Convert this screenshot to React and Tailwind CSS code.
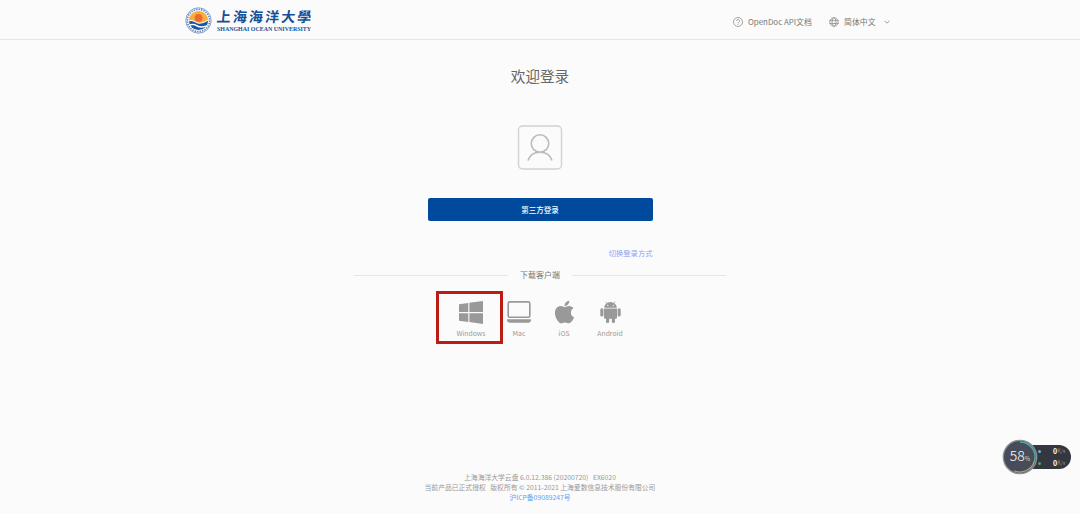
import React from "react";
import { FaApple } from "react-icons/fa";

const SchoolLogo = () => (
  <svg viewBox="0 0 52 52" className="h-[27px] w-[27px]">
    <defs>
      <clipPath id="emblem">
        <circle cx="26" cy="26" r="18.500" />
      </clipPath>
    </defs>
    <circle cx="26" cy="26" r="24.500" fill="#f3f7fc" stroke="#7396c6" strokeWidth="1.600" />
    <circle cx="26" cy="26" r="21.500" fill="none" stroke="#5c82b8" strokeWidth="3" strokeDasharray="2.600 2.200" />
    <circle cx="26" cy="26" r="18.500" fill="#f9ad3c" />
    <g clipPath="url(#emblem)">
      <circle cx="26" cy="21" r="7.500" fill="#ee6830" />
      <path d="M5 27c8-4 12-1 17 2s13 1 25-6v28H5z" fill="#fff" />
      <path d="M5 29c8-4 12-1 17 2s13 1 25-6v8c-10 5-17 5-23 2s-12-4-19 0z" fill="#1956a6" />
      <path d="M5 38c7-4 12-3 18 0s13 3 24-2v14H5z" fill="#1956a6" />
    </g>
  </svg>
);

const HelpIcon = () => (
  <svg viewBox="0 0 20 20" className="h-[10px] w-[10px]" fill="none" stroke="#888" strokeWidth="1.500">
    <circle cx="10" cy="10" r="9" />
    <path d="M7 8a3 3 0 1 1 4.400 2.600C10.300 11.200 10 11.700 10 13M10 14.500v1.700" />
  </svg>
);

const GlobeIcon = () => (
  <svg viewBox="0 0 20 20" className="mt-px h-[10px] w-[10px]" fill="none" stroke="#888" strokeWidth="1.500">
    <circle cx="10" cy="10" r="8.500" />
    <ellipse cx="10" cy="10" rx="4" ry="8.500" />
    <path d="M1 7.200h18M1 13h18" />
  </svg>
);

const WindowsIcon = () => (
  <svg viewBox="0 0 24 23" className="h-[23px] w-6" fill="#999">
    <path d="M0 3.300 9.300 2v9H0zM10.400 1.800 24 0v11H10.400zM0 12.200h9.300V21L0 19.700zM10.400 12.200H24V23l-13.600-1.900z" />
  </svg>
);

const MacIcon = () => (
  <svg viewBox="0 0 24 22" className="h-[22px] w-6">
    <rect x="1.200" y="0.900" width="21.600" height="15.400" rx="1.500" fill="none" stroke="#999" strokeWidth="1.600" />
    <path d="M0.100 18.200h23.800v1.200c0 1.500-1.500 2.300-3.500 2.300H3.600c-2 0-3.500-.8-3.500-2.300z" fill="#999" />
  </svg>
);

const AndroidIcon = () => (
  <svg viewBox="0 0 21 22" className="h-[22px] w-[21px]" fill="#999">
    <path d="M4.200 6.700a6.300 5.700 0 0 1 12.600 0z" />
    <path d="m7.200 2.600-1.300-2M13.800 2.600l1.300-2" stroke="#999" strokeWidth=".7" />
    <circle cx="7.800" cy="4.400" r=".6" fill="#fbfbfb" />
    <circle cx="13.200" cy="4.400" r=".6" fill="#fbfbfb" />
    <path d="M4 7.500h13v9a1.200 1.200 0 0 1-1.200 1.200H5.200A1.200 1.200 0 0 1 4 16.500z" />
    <rect x=".3" y="7.300" width="3.100" height="8.300" rx="1.500" />
    <rect x="17.600" y="7.300" width="3.100" height="8.300" rx="1.500" />
    <rect x="6" y="14" width="3.200" height="8" rx="1.500" />
    <rect x="11.800" y="14" width="3.200" height="8" rx="1.500" />
  </svg>
);

const clients = [
  { name: "Windows", icon: <WindowsIcon />, width: "w-[60px]", selected: true },
  { name: "Mac", icon: <MacIcon />, width: "w-9" },
  { name: "iOS", icon: <FaApple className="h-[26px] w-[21px] shrink-0 text-[#999]" />, width: "w-[54px]" },
  { name: "Android", icon: <AndroidIcon />, width: "w-[38px]" },
];

const Header = () => (
  <header className="flex h-10 shrink-0 items-center border-b border-[#e5e5e5] pl-[185px]">
    <div className="flex w-[548px] items-center gap-[5px] pt-0.5">
      <SchoolLogo />
      <div className="flex flex-col text-[#164f99]">
        <span className="h-[18px] -skew-x-6 whitespace-nowrap font-['Noto_Sans_CJK_TC',sans-serif] text-[14px] font-bold leading-[18px] tracking-[2.100px]">
          上海海洋大學
        </span>
        <span className="whitespace-nowrap font-['Liberation_Serif',serif] text-[5.950px] font-bold leading-[9px]">
          SHANGHAI OCEAN UNIVERSITY
        </span>
      </div>
    </div>
    <nav className="flex items-center pt-1 text-[7.900px] leading-3 text-[#777]">
      <HelpIcon />
      <a className="ml-[5px] w-[81px] whitespace-nowrap">OpenDoc API文档</a>
      <GlobeIcon />
      <span className="ml-[5px] w-10 whitespace-nowrap">简体中文</span>
      <svg viewBox="0 0 6 4" className="h-1 w-1.5" fill="none" stroke="#888" strokeWidth=".8">
        <path d="m.5.700 2.500 2.500L5.500.700" />
      </svg>
    </nav>
  </header>
);

const SpeedRow = ({ dot }) => (
  <div className="flex h-3 items-center">
    <span className={`mr-3 h-[3px] w-[3px] rounded-full ${dot}`} />
    <span className="font-bold">0</span>
    <span className="text-[5.500px] text-[#8b8e95]">K/s</span>
  </div>
);

const SpeedWidget = () => (
  <div className="absolute left-[1002px] top-[439px] flex h-9 w-[69px] items-center">
    <div className="ml-3 flex h-6 w-[57px] flex-col justify-center rounded-r-xl bg-[#34373f] pl-6 text-[7px] leading-3 text-white">
      <SpeedRow dot="bg-[#62b4df]" />
      <SpeedRow dot="bg-[#47a65a]" />
    </div>
    <div className="absolute left-0 top-0 flex h-9 w-9 items-center justify-center">
      <svg viewBox="0 0 36 36" className="absolute h-9 w-9" fill="none">
        <circle cx="18" cy="18" r="16.700" fill="#484c59" stroke="#8d9095" strokeWidth="1.300" />
        <path d="M18 3a15 15 0 0 1 14.500 19" stroke="#52a7a8" strokeWidth="1.400" />
        <path d="M32.500 22A15 15 0 0 1 12 31.700" stroke="#a6aa80" strokeWidth="1.200" />
      </svg>
      <span className="relative flex items-baseline text-[14px] font-light leading-4 text-white">
        58<span className="text-[6px]">%</span>
      </span>
    </div>
  </div>
);

const App = () => {
  return (
    <div className="relative flex h-[514px] w-[1080px] flex-col overflow-hidden bg-[#fbfbfb] font-['Noto_Sans_CJK_SC',sans-serif]">
      <Header />

      <main className="flex flex-1 flex-col items-center pt-[25px]">
        <h1 className="text-[14.600px] leading-[22px] text-[#666]">欢迎登录</h1>

        <svg viewBox="0 0 46 46" className="mt-[37px] h-[46px] w-[46px]" fill="none" stroke="#bbb">
          <rect x="1.500" y="2" width="43" height="43" rx="4" strokeWidth="1.400" stroke="#d2d2d2" />
          <circle cx="23" cy="19.500" r="8.700" strokeWidth="1.600" />
          <path d="M11 36.500c1.500-5 6-8.300 12-8.300s10.500 3.300 12 8.300" strokeWidth="1.600" />
        </svg>

        <button className="mt-7 h-[23px] w-[225px] rounded-[2px] bg-[#004a9d] text-[7.500px] font-medium leading-[23px] text-white">
          第三方登录
        </button>

        <div className="mt-[26px] flex h-3 w-[225px] justify-end">
          <a className="text-[7.300px] leading-3 text-[#8fa2f2]">切换登录方式</a>
        </div>

        <div className="mt-2 flex h-4 w-[372px] items-center justify-between">
          <span className="h-px w-[154px] bg-[#e5e5e5]" />
          <span className="text-[8px] leading-4 text-[#777]">下载客户端</span>
          <span className="h-px w-[154px] bg-[#e5e5e5]" />
        </div>

        <div className="mt-[17px] flex h-11 w-[198px]">
          {clients.map((client) => (
            <div key={client.name} className={`relative flex shrink-0 flex-col items-center ${client.width}`}>
              <div className="flex h-6 items-center">{client.icon}</div>
              <span className="mt-[3px] text-[6.800px] leading-3 text-[#999]">{client.name}</span>
              {client.selected && (
                <div className="absolute -left-[5px] -top-[9px] h-[53px] w-[67px] border-3 border-[#bd1b16]" />
              )}
            </div>
          ))}
        </div>
      </main>

      <footer className="flex h-[42px] shrink-0 flex-col items-center text-[6.800px] leading-[10px] text-[#999]">
        <p className="whitespace-pre">上海海洋大学云盘 6.0.12.386 (20200720)   EX6020</p>
        <p className="whitespace-pre">当前产品已正式授权   版权所有 © 2011-2021 上海爱数信息技术股份有限公司</p>
        <a className="text-[#68a2f1]">沪ICP备09089247号</a>
      </footer>

      <SpeedWidget />
    </div>
  );
};

export default App;
